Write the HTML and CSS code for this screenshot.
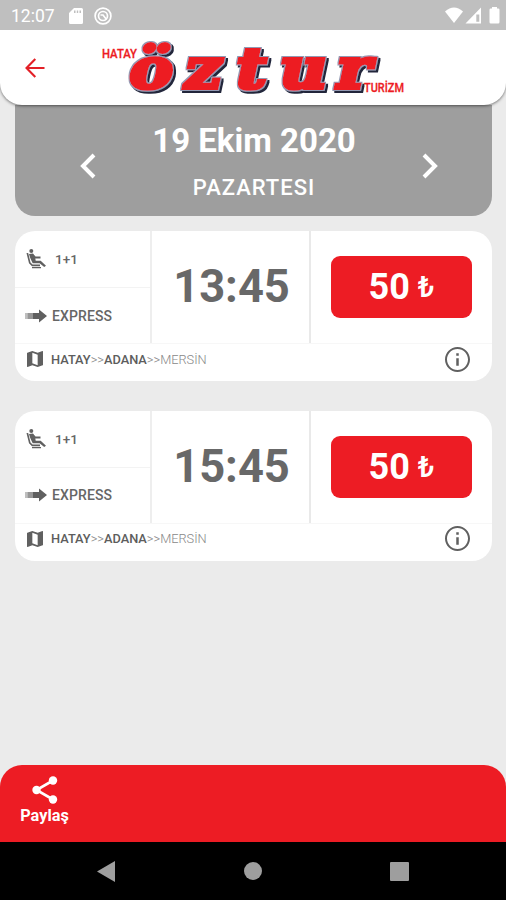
FILE: index.html
```html
<!DOCTYPE html>
<html lang="tr">
<head>
<meta charset="utf-8">
<title>Hatay Öztur Turizm</title>
<link rel="stylesheet" href="styles.css">
</head>
<body>
<svg class="defs" width="0" height="0" aria-hidden="true">
  <symbol id="seat" viewBox="0 0 22 22">
    <circle cx="5.300" cy="3" r="2"/>
    <path d="M3 6 7 5.500l2.500 3 5 .1v1.900l-5.200-.1.4 2.300h5l5.300 5.100-1.800 1.300-4.600-3.900H6.700L4 9.500z"/>
    <path d="M.5 5h1.700l2.300 9.500 2 2H14v1.700H6l-3-3zM6 19h9v1.300H6z"/>
  </symbol>
  <symbol id="express" viewBox="0 0 22 14">
    <path d="M0 4h2.500v6H0z" opacity=".4"/><path d="M2.500 4h5v6h-5z" opacity=".65"/>
    <path d="M7.500 4H14V.6L22 7l-8 6.400V10H7.500z"/>
  </symbol>
  <symbol id="map" viewBox="3 3 18 18">
    <path d="M20.500 3l-.16.03L15 5.100 9 3 3.360 4.900c-.21.07-.36.25-.36.48V20.500c0 .28.22.5.5.5l.16-.03L9 18.900l6 2.100 5.640-1.900c.21-.07.36-.25.36-.48V3.500c0-.28-.22-.5-.5-.5zM15 19l-6-2.110V5l6 2.110V19z"/>
  </symbol>
  <symbol id="info" viewBox="2 2 20 20">
    <path d="M11 7h2v2h-2zm0 4h2v6h-2zm1-9C6.480 2 2 6.480 2 12s4.480 10 10 10 10-4.480 10-10S17.520 2 12 2zm0 18.400c-4.640 0-8.400-3.760-8.400-8.400S7.360 3.600 12 3.600s8.400 3.760 8.400 8.400-3.760 8.400-8.400 8.400z"/>
  </symbol>
</svg>
<div class="screen">
  <div class="status">
    <span class="clock">12:07</span>
    <svg class="sd" width="14" height="16" viewBox="0 0 14 16"><path fill="#fff" fill-rule="evenodd" d="M5 0h7.500Q14 0 14 1.500v13q0 1.500-1.500 1.500h-11Q0 16 0 14.500V5zM5 2.500V5h1.500V2.500zm2.800 0V5h1.400V2.500zm2.700 0V5H12V2.500z"/></svg>
    <svg class="dnd" width="18" height="18" viewBox="0 0 18 18" fill="none" stroke="#fff"><circle cx="9" cy="9" r="7.900" stroke-width="1.700"/><circle cx="9" cy="9" r="4.500" stroke-width="1.700"/><path d="M6.500 8H9l3.500 4.500" stroke-width="1.700"/></svg>
    <svg class="signals" width="56" height="18" viewBox="0 0 56 18" fill="#fff"><path d="M0 4.500Q9-3.500 18 4.500L9 16z"/><path fill-rule="evenodd" d="M36 .5V16.500H20.500zM34.300 7.500h-3V14.800h3z"/><path d="M47 1.500V0h5v1.500h1.200q1.300 0 1.300 1.300v12.200q0 1.500-1.300 1.500h-7.400q-1.300 0-1.300-1.500V2.800q0-1.300 1.300-1.300z"/></svg>
  </div>
  <header class="appbar">
    <svg class="back" width="20" height="20" viewBox="0 0 20 20" fill="none" stroke="#e32027" stroke-width="2.100"><path d="M19.500 10H2M10.300 1 1.500 10l8.800 9"/></svg>
    <svg class="logo" width="310" height="64" viewBox="98 36 310 64">
      <defs>
        <filter id="edge" x="-10%" y="-15%" width="120%" height="130%">
          <feMorphology in="SourceAlpha" operator="dilate" radius=".8" result="fat"/>
          <feOffset in="fat" dx="2" dy="1.500" result="low"/>
          <feFlood flood-color="#20253b"/><feComposite in2="low" operator="in" result="shade"/>
          <feFlood flood-color="#9298b2"/><feComposite in2="fat" operator="in" result="rim"/>
          <feMerge><feMergeNode in="shade"/><feMergeNode in="rim"/><feMergeNode in="SourceGraphic"/></feMerge>
        </filter>
      </defs>
      <g filter="url(#edge)"><text class="brand" transform="translate(0 87.500) skewX(-12) scale(1.120 .960)" x="113 162 207.500 247 298" y="0">öztur</text></g>
      <text class="brand-small" x="102" y="57.500" textLength="35" lengthAdjust="spacingAndGlyphs">HATAY</text>
      <text class="brand-small" x="364" y="92" textLength="40" lengthAdjust="spacingAndGlyphs">TURİZM</text>
    </svg>
  </header>
  <main>
    <section class="date">
      <svg width="16" height="26" viewBox="0 0 16 26" fill="none" stroke="#fff" stroke-width="4"><path d="M14 2 3 13l11 11"/></svg>
      <div class="date-text"><div class="day">19 Ekim 2020</div><div class="weekday">PAZARTESI</div></div>
      <svg width="16" height="26" viewBox="0 0 16 26" fill="none" stroke="#fff" stroke-width="4"><path d="m2 2 11 11L2 24"/></svg>
    </section>
    <article class="trip">
      <div class="trip-main">
        <div class="features">
          <div class="feature"><svg width="22" height="22"><use href="#seat"/></svg><span class="layout">1+1</span></div>
          <div class="feature express"><svg width="22" height="14"><use href="#express"/></svg><span>EXPRESS</span></div>
        </div>
        <div class="time">13:45</div>
        <div class="buy"><button class="price">50 <span class="lira">₺</span></button></div>
      </div>
      <div class="route"><svg width="16" height="16"><use href="#map"/></svg><span class="stops"><b>HATAY</b>&gt;&gt;<b>ADANA</b>&gt;&gt;MERSİN</span><svg class="info" width="25" height="25"><use href="#info"/></svg></div>
    </article>
    <article class="trip">
      <div class="trip-main">
        <div class="features">
          <div class="feature"><svg width="22" height="22"><use href="#seat"/></svg><span class="layout">1+1</span></div>
          <div class="feature express"><svg width="22" height="14"><use href="#express"/></svg><span>EXPRESS</span></div>
        </div>
        <div class="time">15:45</div>
        <div class="buy"><button class="price">50 <span class="lira">₺</span></button></div>
      </div>
      <div class="route"><svg width="16" height="16"><use href="#map"/></svg><span class="stops"><b>HATAY</b>&gt;&gt;<b>ADANA</b>&gt;&gt;MERSİN</span><svg class="info" width="25" height="25"><use href="#info"/></svg></div>
    </article>
  </main>
  <footer class="share">
    <div class="share-item">
      <svg width="26" height="28" viewBox="0 0 26 28" fill="#fff"><path d="M21 4.500 4.500 14 21 23.500" fill="none" stroke="#fff" stroke-width="2.600"/><circle cx="21" cy="4.500" r="4.200"/><circle cx="4.500" cy="14" r="4.200"/><circle cx="21" cy="23.500" r="4.200"/></svg>
      <span>Paylaş</span>
    </div>
  </footer>
  <nav class="sysnav">
    <svg width="18" height="21" viewBox="0 0 18 21"><path d="M18 0v21L0 10.500z"/></svg>
    <svg width="18" height="18" viewBox="0 0 18 18"><circle cx="9" cy="9" r="9"/></svg>
    <svg width="19" height="19" viewBox="0 0 19 19"><rect width="19" height="19" rx="1"/></svg>
  </nav>
</div>
</body>
</html>
```
FILE: styles.css
```css
* { box-sizing: border-box; }
body { margin: 0; background: #ebebeb; font-family: Roboto, "Liberation Sans", sans-serif; }
svg { display: block; flex: none; }
.defs { position: absolute; }
.screen { width: 506px; height: 900px; display: flex; flex-direction: column; overflow: hidden; background: #ebebeb; }
.status { position: relative; z-index: 2; height: 30px; flex: none; display: flex; align-items: center; padding: 2px 5px 0 11px; background: #bfbfbf; color: #fff; }
.clock { width: 58px; font-size: 17.5px; line-height: 20px; }
.dnd { margin-left: 11px; }
.signals { margin-left: auto; }
.appbar { position: relative; z-index: 1; height: 75px; flex: none; display: flex; align-items: flex-start; background: #fff; border-radius: 0 0 22px 22px; box-shadow: 0 1px 3px rgba(0,0,0,.5); }
.back { margin: 28px 0 0 25px; }
.logo { margin: 6px 0 0 53px; overflow: visible; }
.brand { font: bold 58px "DejaVu Serif", serif; fill: #ed1c24; stroke: #ed1c24; stroke-width: 4.2px; }
.brand-small { font: 500 13px Roboto, sans-serif; fill: #ed1c24; stroke: #ed1c24; stroke-width: .3px; }
main { flex: 1; padding: 0 14px 0 15px; }
.date { height: 111px; display: flex; justify-content: space-between; padding: 48px 54px 0 65px; background: #9e9e9e; border-radius: 0 0 20px 20px; color: #fff; }
.date-text { margin: -31px 10px 0 0; text-align: center; }
.day { font-size: 33px; line-height: 38px; font-weight: 700; white-space: nowrap; }
.weekday { margin-top: 15px; font-size: 22px; line-height: 26px; font-weight: 500; letter-spacing: 1px; }
.trip { height: 150px; margin-top: 15px; background: #fff; border-radius: 20px; overflow: hidden; }
.trip + .trip { margin-top: 29.5px; }
.trip-main { height: 112px; display: grid; grid-template-columns: 137px 159px 1fr; }
.features { border-right: 2px solid #eee; }
.feature { height: 56px; display: flex; align-items: center; padding-left: 11px; color: #666; font-size: 14px; font-weight: 500; }
.feature + .feature { border-top: 1px solid #f3f3f3; }
.feature svg, .route svg { fill: #606060; }
.layout { margin-left: 7px; font-size: 13.5px; }
.express { padding-left: 10px; }
.express span { margin-left: 5px; letter-spacing: .1px; }
.time { display: flex; align-items: center; justify-content: center; border-right: 2px solid #e9e9e9; color: #686868; font-size: 45.3px; font-weight: 700; padding: 0 0 1px 2px; }
.buy { padding: 25px 20px; }
.price { display: flex; align-items: center; justify-content: center; width: 141px; height: 62px; border: 0; border-radius: 9px; padding: 0; gap: 8px; background: #ed1c24; color: #fff; font: 700 36px Roboto, sans-serif; }
.lira { font-size: 29px; font-weight: 500; }
.route { height: 38px; display: flex; align-items: center; padding: 0 22px 7px 12px; border-top: 1px solid #f7f7f7; color: #888; }
.stops { margin-left: 8px; font-size: 12.8px; font-weight: 300; }
.stops b { font-weight: 500; color: #5d5d5d; }
.info { margin-left: auto; }
.share { height: 77px; flex: none; padding: 11px 20px; background: #ed1c24; border-radius: 22px 22px 0 0; color: #fff; }
.share-item { width: 49px; display: flex; flex-direction: column; align-items: center; font-size: 16.3px; line-height: 20px; font-weight: 700; }
.share-item span { margin-top: 2px; }
.sysnav { height: 58px; flex: none; display: flex; align-items: center; justify-content: space-between; padding: 0 97px; background: #000; }
.sysnav svg { fill: #9e9e9e; }
```
